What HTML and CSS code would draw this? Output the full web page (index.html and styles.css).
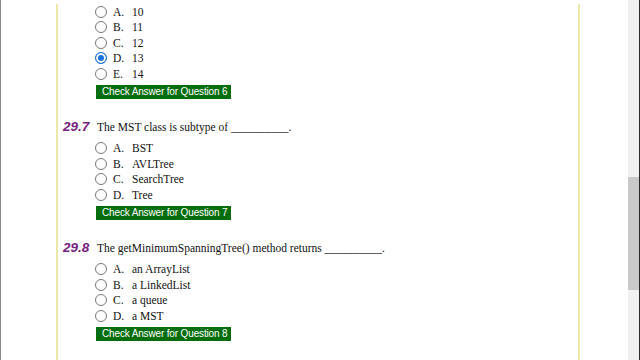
FILE: index.html
```html
<!DOCTYPE html>
<html lang="en">

<head>
    <meta charset="UTF-8">
    <meta name="viewport" content="width=device-width, initial-scale=1.0">
    <title>Chapter 29 Quiz</title>
    <link rel="stylesheet" href="styles.css">
</head>

<body>
    <div class="edge"></div>
    <div class="main">
        <div class="sheet">
            <!-- question 6, top part scrolled away -->
            <div class="question first">
                <ul class="choices">
                    <li><span class="radio"></span><span class="letter">A.</span>10</li>
                    <li><span class="radio"></span><span class="letter">B.</span>11</li>
                    <li><span class="radio"></span><span class="letter">C.</span>12</li>
                    <li><span class="radio checked"></span><span class="letter">D.</span>13</li>
                    <li><span class="radio"></span><span class="letter">E.</span>14</li>
                </ul>
                <div class="check">Check Answer for Question 6</div>
            </div>

            <div class="question">
                <p class="stem"><span class="num">29.7</span>The MST class is subtype of __________.</p>
                <ul class="choices">
                    <li><span class="radio"></span><span class="letter">A.</span>BST</li>
                    <li><span class="radio"></span><span class="letter">B.</span>AVLTree</li>
                    <li><span class="radio"></span><span class="letter">C.</span>SearchTree</li>
                    <li><span class="radio"></span><span class="letter">D.</span>Tree</li>
                </ul>
                <div class="check">Check Answer for Question 7</div>
            </div>

            <div class="question">
                <p class="stem"><span class="num">29.8</span>The getMinimumSpanningTree() method returns __________.</p>
                <ul class="choices">
                    <li><span class="radio"></span><span class="letter">A.</span>an ArrayList</li>
                    <li><span class="radio"></span><span class="letter">B.</span>a LinkedList</li>
                    <li><span class="radio"></span><span class="letter">C.</span>a queue</li>
                    <li><span class="radio"></span><span class="letter">D.</span>a MST</li>
                </ul>
                <div class="check">Check Answer for Question 8</div>
            </div>
        </div>
    </div>
    <div class="scrollbar">
        <div class="thumb"></div>
    </div>
    <div class="frame"></div>
</body>

</html>
```

FILE: styles.css
```css
* {
    margin: 0;
    padding: 0;
    box-sizing: border-box;
}

body {
    width: 640px;
    height: 360px;
    overflow: hidden;
    display: flex;
    background: #fff;
    font-family: "Liberation Serif", "Times New Roman", serif;
    font-size: 11.5px;
    color: #111;
}

.edge {
    width: 1px;
    background: #8c8c8c;
}

.main {
    flex: 1;
    padding-left: 55px;
}

.sheet {
    width: 524px;
    height: 100%;
    border-left: 2px solid #ece8a8;
    border-right: 2px solid #ece8a8;
    padding-left: 5px;
}

.question {
    margin-top: 19.5px;
}

.question.first {
    margin-top: 3.75px;
}

.stem {
    line-height: 16px;
    display: flex;
    white-space: pre;
}

.num {
    width: 34px;
    font-family: "Liberation Sans", Arial, sans-serif;
    font-weight: bold;
    font-style: italic;
    font-size: 13.5px;
    color: #76217f;
}

.choices {
    list-style: none;
    padding-left: 32px;
    margin-top: 5.5px;
}

.question.first .choices {
    margin-top: 0;
}

.choices li {
    display: flex;
    align-items: center;
    height: 15.5px;
}

.radio {
    width: 12px;
    height: 12px;
    border: 1.5px solid #777;
    border-radius: 50%;
    margin-right: 6px;
}

.radio.checked {
    border-color: #1a6fdc;
    background: #1a6fdc;
    box-shadow: inset 0 0 0 2px #fff;
}

.letter {
    width: 19px;
}

.check {
    display: inline-block;
    margin: 4px 0 0 33px;
    height: 14px;
    line-height: 14px;
    padding: 0 4px 0 6px;
    background: #046d0c;
    color: #fff;
    font-family: "Liberation Sans", Arial, sans-serif;
    font-size: 10px;
    letter-spacing: -0.15px;
}

.scrollbar {
    width: 11px;
    background: #f1f1f1;
    padding-top: 177px;
}

.thumb {
    height: 113px;
    background: #c9c9c9;
}

.frame {
    width: 1px;
    background: #2a2a2a;
}
```
